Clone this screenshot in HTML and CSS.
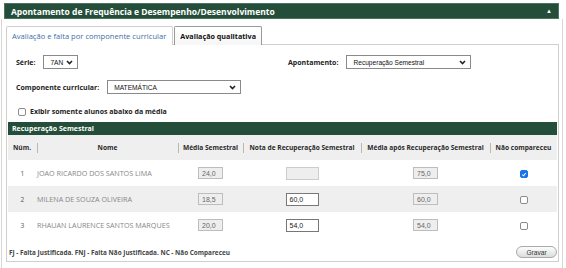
FILE: index.html
```html
<!DOCTYPE html>
<html lang="pt-BR">
<head>
    <meta charset="UTF-8">
    <title>Apontamento de Frequência e Desempenho</title>
    <link rel="stylesheet" href="styles.css">
</head>
<body>
    <div class="page">
        <!-- cabeçalho do bloco -->
        <div class="box-header">
            <span class="box-title">Apontamento de Frequência e Desempenho/Desenvolvimento</span>
            <span class="collapse">&#9650;</span>
        </div>

        <div class="box-body">
            <!-- abas -->
            <div class="tabs">
                <div class="tab active">Avaliação e falta por componente curricular</div>
                <div class="tab">Avaliação qualitativa</div>
            </div>

            <div class="tab-panel">
                <!-- filtros -->
                <div class="filters">
                    <div class="field">
                        <span class="label">Série:</span>
                        <div class="select select-serie">
                            <span>7AN</span>
                            <svg class="chevron" width="7" height="5" viewBox="0 0 7 5"><polyline points="1,1 3.5,3.5 6,1" fill="none" stroke="#222" stroke-width="1.6"/></svg>
                        </div>
                    </div>
                    <div class="field">
                        <span class="label">Apontamento:</span>
                        <div class="select select-apont">
                            <span>Recuperação Semestral</span>
                            <svg class="chevron" width="7" height="5" viewBox="0 0 7 5"><polyline points="1,1 3.5,3.5 6,1" fill="none" stroke="#222" stroke-width="1.6"/></svg>
                        </div>
                    </div>
                    <div class="field">
                        <span class="label">Componente curricular:</span>
                        <div class="select select-comp">
                            <span>MATEMÁTICA</span>
                            <svg class="chevron" width="7" height="5" viewBox="0 0 7 5"><polyline points="1,1 3.5,3.5 6,1" fill="none" stroke="#222" stroke-width="1.6"/></svg>
                        </div>
                    </div>
                </div>

                <label class="check-row">
                    <span class="checkbox"></span>
                    <span>Exibir somente alunos abaixo da média</span>
                </label>

                <!-- tabela -->
                <div class="section-bar">Recuperação Semestral</div>
                <table class="grid">
                    <thead>
                        <tr>
                            <th class="col-num">Núm.</th>
                            <th class="col-nome">Nome</th>
                            <th class="col-media">Média Semestral</th>
                            <th class="col-nota">Nota de Recuperação Semestral</th>
                            <th class="col-apos">Média após Recuperação Semestral</th>
                            <th class="col-nc">Não compareceu</th>
                        </tr>
                    </thead>
                    <tbody>
                        <tr>
                            <td class="num">1</td>
                            <td class="nome">JOAO RICARDO DOS SANTOS LIMA</td>
                            <td><span class="box box-sm">24,0</span></td>
                            <td><span class="box box-nota disabled"></span></td>
                            <td><span class="box box-sm">75,0</span></td>
                            <td><span class="checkbox checked"><svg width="7" height="7" viewBox="0 0 7 7"><polyline points="1.5,3.6 3,5 5.6,1.8" fill="none" stroke="#fff" stroke-width="1.2"/></svg></span></td>
                        </tr>
                        <tr class="alt">
                            <td class="num">2</td>
                            <td class="nome">MILENA DE SOUZA OLIVEIRA</td>
                            <td><span class="box box-sm">18,5</span></td>
                            <td><span class="box box-nota">60,0</span></td>
                            <td><span class="box box-sm">60,0</span></td>
                            <td><span class="checkbox"></span></td>
                        </tr>
                        <tr>
                            <td class="num">3</td>
                            <td class="nome">RHAUAN LAURENCE SANTOS MARQUES</td>
                            <td><span class="box box-sm">20,0</span></td>
                            <td><span class="box box-nota">54,0</span></td>
                            <td><span class="box box-sm">54,0</span></td>
                            <td><span class="checkbox"></span></td>
                        </tr>
                    </tbody>
                </table>

                <div class="panel-footer">
                    <span class="legend">FJ - Falta Justificada. FNJ - Falta Não Justificada. NC - Não Compareceu</span>
                    <button class="btn-gravar">Gravar</button>
                </div>
            </div>
        </div>
    </div>
</body>
</html>
```

FILE: styles.css
```css
/* base */
body {
    margin: 0;
    background: #fff;
    font-family: "Open Sans", "Liberation Sans", Arial, sans-serif;
    color: #333;
    font-size: 7px;
}
* {
    box-sizing: border-box;
}

.page {
    width: 563px;
    padding-top: 3px;
}

/* barra verde do topo */
.box-header {
    margin-left: 4px;
    width: 555px;
    height: 16px;
    background: #244e39;
    border: 1px solid #4d7462;
    color: #fff;
    display: flex;
    align-items: center;
    justify-content: space-between;
    padding: 0 6px;
}
.box-title {
    font-weight: 700;
    font-size: 8.5px;
}
.collapse {
    font-size: 6px;
}

.box-body {
    margin-left: 1px;
    width: 562px;
    height: 249px;
    border-left: 1px solid #d6d6d6;
    border-right: 1px solid #d6d6d6;
    padding: 7px 3px 0 4px;
}

/* abas */
.tabs {
    display: flex;
    gap: 1px;
}
.tab {
    height: 19px;
    padding: 0 5px;
    display: flex;
    align-items: center;
    border: 1px solid #999;
    border-bottom: none;
    border-radius: 2px 2px 0 0;
    font-weight: 700;
    color: #111;
    font-size: 7.2px;
    background: linear-gradient(#fff, #f6f6f6);
    margin-bottom: -1px;
}
.tab.active {
    border-color: #cfcfcf;
    color: #3c6fa8;
    font-weight: 400;
    font-size: 7.6px;
    background: #fff;
    padding-right: 6px;
    position: relative;
    z-index: 1;
}

.tab-panel {
    border: 1px solid #cfcfcf;
    height: 218px;
    padding-top: 10px;
}

/* filtros */
.filters {
    display: grid;
    grid-template-columns: 272px auto;
    row-gap: 11px;
    padding-left: 9px;
}
.field {
    display: flex;
    align-items: center;
}
.label {
    font-weight: 700;
    color: #222;
    font-size: 7px;
}
.select {
    height: 14px;
    border: 1px solid #8a8a8a;
    background: #fff;
    display: flex;
    align-items: center;
    justify-content: space-between;
    padding: 0 4px 0 6px;
    font-family: "Liberation Sans", Arial, sans-serif;
    font-size: 6.6px;
    color: #111;
}
.select-serie {
    margin-left: 8px;
    width: 35px;
}
.select-apont {
    margin-left: 8px;
    width: 125px;
}
.select-comp {
    margin-left: 8px;
    width: 134px;
}

.check-row {
    display: flex;
    align-items: center;
    gap: 4px;
    margin: 13px 0 0 11px;
    font-weight: 700;
    color: #222;
}
.checkbox {
    display: inline-flex;
    align-items: center;
    justify-content: center;
    width: 8px;
    height: 8px;
    border: 1px solid #8c8c8c;
    border-radius: 2px;
    background: #fff;
    vertical-align: middle;
}
.checkbox.checked {
    background: #1a73e8;
    border-color: #1a73e8;
}

.section-bar {
    margin: 6px 1px 0 1px;
    height: 13px;
    background: #244e39;
    color: #fff;
    font-weight: 700;
    font-size: 7px;
    padding-left: 4px;
    display: flex;
    align-items: center;
}

/* tabela */
.grid {
    margin: 0 1px;
    width: 549px;
    border-collapse: collapse;
    table-layout: fixed;
}
.grid th {
    height: 25px;
    background: #efefef;
    font-weight: 700;
    color: #2b2b2b;
    font-size: 6.6px;
    text-align: center;
    position: relative;
    padding: 0;
}
.grid th + th::before {
    content: "";
    position: absolute;
    left: 0;
    top: 8px;
    height: 10px;
    border-left: 1px solid #b8b8b8;
}
.grid th.col-num {
    text-align: left;
    padding-left: 5px;
}
.col-num { width: 29px; }
.col-nome { width: 141px; }
.col-media { width: 65px; }
.col-nota { width: 118px; }
.col-apos { width: 129px; }
.col-nc { width: 67px; }

.grid td {
    height: 26px;
    padding: 0;
    text-align: center;
    color: #888;
    font-size: 7.2px;
}
.grid td.num {
    color: #555;
    font-size: 6.6px;
}
.grid td.nome {
    text-align: left;
    padding-left: 0;
}
.grid tr.alt td {
    background: #efefef;
}

.box {
    display: inline-flex;
    align-items: center;
    height: 12px;
    border: 1px solid #bdbdbd;
    background: #eee;
    padding-left: 3px;
    font-family: "Liberation Sans", Arial, sans-serif;
    font-size: 7px;
    color: #666;
    vertical-align: middle;
}
.box-sm {
    width: 25px;
}
.box-nota {
    width: 33px;
    height: 13px;
    background: #fff;
    border-color: #777;
    color: #222;
}
.box-nota.disabled {
    background: #eee;
    border-color: #ccc;
}

.panel-footer {
    display: flex;
    align-items: center;
    justify-content: space-between;
    padding: 8px 1px 0 2px;
}
.legend {
    font-weight: 700;
    font-size: 6.4px;
    color: #444;
}
.btn-gravar {
    width: 41px;
    height: 12px;
    border: 1px solid #aaa;
    border-radius: 7px;
    background: linear-gradient(#fdfdfd, #dcdcdc);
    font-family: "Liberation Sans", Arial, sans-serif;
    font-size: 6.6px;
    color: #333;
    padding: 0;
}
```
